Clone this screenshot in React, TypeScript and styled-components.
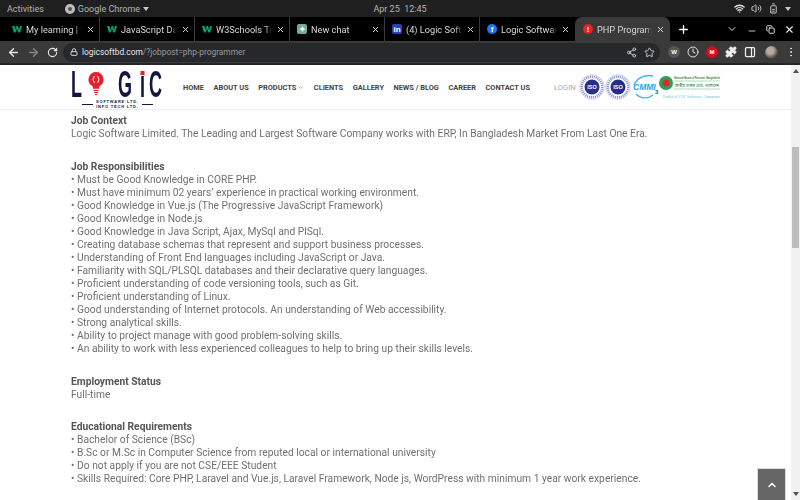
import React from 'react';
import styled, { createGlobalStyle } from 'styled-components';
import {
  ArrowLeft, ArrowRight, RotateCw, Lock, Share2, Star, Puzzle, X, Plus, ChevronDown,
  ChevronUp, Minus, Copy, Wifi, Volume2, BatteryMedium, Clock, PanelRight, MoreVertical,
} from 'lucide-react';

const GlobalStyle = createGlobalStyle`
  html, body { margin: 0; padding: 0; overflow: hidden; }
  body { font-family: "Roboto", "Liberation Sans", sans-serif; background: #fff; }
`;

const Screen = styled.div`
  position: relative;
  width: 800px;
  height: 500px;
  display: flex;
  flex-direction: column;
  overflow: hidden;
`;

/* ---- ubuntu top bar ---- */
const TopBar = styled.div`
  height: 17px;
  background: #1f1f1f;
  color: #b4b4b4;
  font: 9px "Roboto", sans-serif;
  display: grid;
  grid-template-columns: 1fr auto 1fr;
  align-items: center;
  padding: 0 7px;
`;

const TopLeft = styled.div`
  display: flex;
  align-items: center;
`;

const AppName = styled.div`
  display: flex;
  align-items: center;
  gap: 3px;
  margin-left: 21px;
`;

const Caret = styled.span`
  width: 0;
  height: 0;
  border-left: 3px solid transparent;
  border-right: 3px solid transparent;
  border-top: 4px solid #c8c8c8;
`;

const TopRight = styled.div`
  display: flex;
  align-items: center;
  justify-content: flex-end;
  gap: 6px;
  padding-right: 2px;
`;

/* ---- tab strip ---- */
const TabStrip = styled.div`
  height: 24px;
  background: #000;
  display: flex;
  align-items: stretch;
  padding-left: 5px;
  color: #d8d8d8;
`;

const Tab = styled.div<{ $active?: boolean; $divider?: boolean }>`
  width: 95px;
  box-sizing: border-box;
  display: flex;
  align-items: center;
  gap: 4px;
  padding: 0 4px 0 ${(p) => (p.$active ? 8 : 7)}px;
  font: 9.200px "Roboto", sans-serif;
  background: ${(p) => (p.$active ? '#3a3a3a' : 'transparent')};
  border-right: 1px solid ${(p) => (p.$divider ? '#3c3c3c' : 'transparent')};
  border-radius: ${(p) => (p.$active ? '7px 7px 0 0' : '0')};
`;

const TabTitle = styled.span`
  flex: 1;
  min-width: 0;
  white-space: nowrap;
  overflow: hidden;
  -webkit-mask-image: linear-gradient(90deg, #000 88%, transparent);
  mask-image: linear-gradient(90deg, #000 88%, transparent);
`;

const TabIcon = styled.span<{ $bg?: string; $color?: string; $round?: boolean }>`
  flex: none;
  width: 10px;
  height: 10px;
  display: flex;
  align-items: center;
  justify-content: center;
  font: bold 8px "Liberation Sans", sans-serif;
  background: ${(p) => p.$bg || 'transparent'};
  color: ${(p) => p.$color || '#fff'};
  border-radius: ${(p) => (p.$round ? '50%' : '2px')};
`;

const WindowControls = styled.div`
  margin-left: auto;
  display: flex;
  align-items: center;
  gap: 9px;
  padding-right: 5px;
`;

const NewTab = styled.div`
  display: flex;
  align-items: center;
  margin-left: 7px;
`;

/* ---- chrome toolbar ---- */
const Toolbar = styled.div`
  height: 22px;
  background: #3a3a3a;
  display: flex;
  align-items: center;
  padding-left: 7px;
  color: #e0e0e0;
  border-bottom: 2px solid #252525;
`;

const NavButtons = styled.div`
  display: flex;
  align-items: center;
  gap: 7px;
  width: 56px;
`;

const UrlBar = styled.div`
  width: 597px;
  height: 19px;
  border-radius: 10px;
  background: #27282b;
  display: flex;
  align-items: center;
  gap: 4px;
  padding: 0 3px 0 7px;
  box-sizing: border-box;
  font: 8.400px "Roboto", sans-serif;
  color: #e6e6e6;
`;

const UrlPath = styled.span`
  color: #9a9a9a;
`;

const UrlActions = styled.div`
  margin-left: auto;
  display: flex;
  gap: 7px;
  padding-right: 2px;
`;

const Extensions = styled.div`
  display: flex;
  align-items: center;
  gap: 7px;
  margin-left: 8px;
`;

const ExtBadge = styled.span<{ $bg: string }>`
  width: 12px;
  height: 12px;
  border-radius: 50%;
  background: ${(p) => p.$bg};
  color: #fff;
  font: bold 6px "Liberation Sans", sans-serif;
  display: flex;
  align-items: center;
  justify-content: center;
`;

const Avatar = styled.span`
  width: 13px;
  height: 13px;
  border-radius: 50%;
  margin-left: 2px;
  background: radial-gradient(circle at 40% 35%, #b9a9a0 0 30%, #4b4038 70%);
`;

/* ---- page ---- */
const Page = styled.div`
  flex: 1;
  display: flex;
  min-height: 0;
`;

const Main = styled.div`
  flex: 1;
  min-width: 0;
`;

const Header = styled.header`
  height: 45px;
  box-sizing: border-box;
  border-bottom: 1px solid #eeeeee;
  display: flex;
  align-items: center;
  padding-left: 71px;
`;

const Logo = styled.div`
  width: 92px;
  flex: none;
  align-self: flex-end;
  display: flex;
  flex-direction: column;
`;

const LogoMark = styled.div`
  display: flex;
  align-items: flex-start;
  height: 27px;
  color: #14163c;
`;

const LogoLetter = styled.span<{ $gap: number; $w: number }>`
  position: relative;
  display: inline-block;
  flex: none;
  width: ${(p) => p.$w}px;
  margin-left: ${(p) => p.$gap}px;
  font: bold 36px/27px "Liberation Sans", sans-serif;
  transform: scaleX(0.5);
  transform-origin: left center;
`;

const LogoDot = styled.span`
  position: absolute;
  left: 1px;
  top: 0;
  width: 8px;
  height: 4px;
  background: #e8202a;
  border-bottom: 1px solid #fff;
`;

const LogoFoot = styled.div`
  display: flex;
  align-items: center;
  gap: 3px;
  margin-top: 1px;
  padding-left: 11px;
`;

const LogoRule = styled.span`
  width: 11px;
  height: 1px;
  background: #14163c;
`;

const LogoSub = styled.div`
  font: bold 4px/5px "Liberation Sans", sans-serif;
  letter-spacing: 0.8px;
  color: #14163c;
  text-align: center;
  white-space: nowrap;
`;

const Nav = styled.nav`
  display: flex;
  align-items: center;
  gap: 9.500px;
  margin-left: 20px;
  font: bold 7.400px "Roboto", sans-serif;
  color: #444;
  white-space: nowrap;
`;

const NavItem = styled.span`
  display: flex;
  align-items: center;
  gap: 1px;
`;

const Login = styled.span`
  margin-left: 24px;
  font: 7.600px "Roboto", sans-serif;
  color: #aaa;
`;

const Badges = styled.div`
  display: flex;
  align-items: center;
  margin-left: 3px;
`;

const Content = styled.main`
  margin: 0 0 0 71px;
  padding-top: 4px;
  font: 11.600px/13px "Roboto", sans-serif;
  color: #707070;
  /* the site's narrow webfont isn't available, so squeeze Roboto to its width */
  transform: scaleX(0.885);
  transform-origin: 0 0;
`;

const Section = styled.section<{ $gap: number }>`
  margin-bottom: ${(p) => p.$gap}px;
`;

const SectionTitle = styled.div`
  font-weight: 700;
  color: #555;
`;

const Line = styled.div`
  white-space: nowrap;
`;

const Scrollbar = styled.div`
  width: 9px;
  flex: none;
  background: #f1f1f1;
  display: flex;
  flex-direction: column;
  align-items: center;
  position: relative;
`;

const ScrollThumb = styled.div`
  width: 7px;
  height: 101px;
  margin-top: 82px;
  background: #bcbcbc;
`;

const ScrollArrow = styled.span<{ $down?: boolean }>`
  position: absolute;
  ${(p) => (p.$down ? 'bottom: 4px' : 'top: 4px')};
  width: 0;
  height: 0;
  border-left: 3px solid transparent;
  border-right: 3px solid transparent;
  ${(p) => (p.$down ? 'border-top' : 'border-bottom')}: 4px solid #505050;
`;

const BackToTop = styled.div`
  position: absolute;
  right: 14px;
  bottom: 0;
  width: 29px;
  height: 32px;
  background: #666;
  border: 1px solid #ddd;
  border-bottom: 0;
  box-sizing: border-box;
  display: flex;
  align-items: center;
  justify-content: center;
  color: #fff;
`;

const tabs = [
  { title: 'My learning | W3Schools', icon: 'w' },
  { title: 'JavaScript Data Types', icon: 'w' },
  { title: 'W3Schools Tryit Editor', icon: 'w' },
  { title: 'New chat', icon: 'gpt' },
  { title: '(4) Logic Software', icon: 'in' },
  { title: 'Logic Software Limited', icon: 'fb' },
];

const navItems = ['HOME', 'ABOUT US', 'PRODUCTS', 'CLIENTS', 'GALLERY', 'NEWS / BLOG', 'CAREER', 'CONTACT US'];

const sections = [
  {
    title: 'Job Context',
    gap: 20,
    lines: ['Logic Software Limited. The Leading and Largest Software Company works with ERP, In Bangladesh Market From Last One Era.'],
  },
  {
    title: 'Job Responsibilities',
    gap: 20,
    lines: [
      '• Must be Good Knowledge in CORE PHP.',
      '• Must have minimum 02 years’ experience in practical working environment.',
      '• Good Knowledge in Vue.js (The Progressive JavaScript Framework)',
      '• Good Knowledge in Node.js',
      '• Good Knowledge in Java Script, Ajax, MySql and PlSql.',
      '• Creating database schemas that represent and support business processes.',
      '• Understanding of Front End languages including JavaScript or Java.',
      '• Familiarity with SQL/PLSQL databases and their declarative query languages.',
      '• Proficient understanding of code versioning tools, such as Git.',
      '• Proficient understanding of Linux.',
      '• Good understanding of Internet protocols. An understanding of Web accessibility.',
      '• Strong analytical skills.',
      '• Ability to project manage with good problem-solving skills.',
      '• An ability to work with less experienced colleagues to help to bring up their skills levels.',
    ],
  },
  { title: 'Employment Status', gap: 19, lines: ['Full-time'] },
  {
    title: 'Educational Requirements',
    gap: 0,
    lines: [
      '• Bachelor of Science (BSc)',
      '• B.Sc or M.Sc in Computer Science from reputed local or international university',
      '• Do not apply if you are not CSE/EEE Student',
      '• Skills Required: Core PHP, Laravel and Vue.js, Laravel Framework, Node js, WordPress with minimum 1 year work experience.',
    ],
  },
];

const W3Glyph = () => (
  <svg width="10" height="10" viewBox="0 0 10 10" style={{ flex: 'none' }}>
    <path d="M0 2h2.500l1 4 1-4h1.500l1 4 1-4H10L8 8.500H6.500l-1.500-4-1.500 4H2z" fill="#04aa6d" />
  </svg>
);

const Favicon = ({ kind }: { kind: string }) => {
  if (kind === 'w') return <W3Glyph />;
  if (kind === 'gpt') return <TabIcon $bg="#74aa9c">✦</TabIcon>;
  if (kind === 'in') return <TabIcon $bg="#2d3fbd">in</TabIcon>;
  return <TabIcon $bg="#1877f2" $round>f</TabIcon>;
};

const Bulb = () => (
  <svg width="16" height="25" viewBox="0 0 16 25" style={{ marginLeft: 6, flex: 'none' }}>
    <path d="M8 1a7.500 7.500 0 0 0-4 13.800c.8.7 1 1.700 1 3h6c0-1.300.2-2.300 1-3A7.500 7.500 0 0 0 8 1z" fill="#e8202a" />
    <path d="M6.500 5 5 8.500 6.500 12M9.500 5 11 8.500 9.500 12" stroke="#fff" strokeWidth="1" fill="none" />
    <path d="M5.500 19.500h5M6 21.500h4M7 23.500h2" stroke="#e8202a" strokeWidth="1.200" />
  </svg>
);

const IsoBadge = () => (
  <svg width="26" height="26" viewBox="0 0 26 26">
    <circle cx="13" cy="13" r="12.300" fill="#fff" stroke="#c4c7e6" strokeWidth="0.800" />
    <circle cx="13" cy="13" r="10.300" fill="none" stroke="#8f95cf" strokeWidth="2.400" strokeDasharray="1.200 0.800" />
    <circle cx="13" cy="13" r="7.500" fill="#242e8f" />
    <text x="13" y="15" textAnchor="middle" fontSize="5.500" fontWeight="700" fill="#fff" fontFamily="Liberation Sans">ISO</text>
  </svg>
);

const CmmiBadge = () => (
  <svg width="28" height="28" viewBox="0 0 28 28">
    <path d="M3 12C6 5 14 1 22 3" stroke="#35b6ee" strokeWidth="1.500" fill="none" />
    <path d="M5 21c5 5 12 5 17 1" stroke="#35b6ee" strokeWidth="1.200" fill="none" />
    <text x="2" y="17" fontSize="8.500" fontWeight="700" fontStyle="italic" fill="#1fa5e6" fontFamily="Liberation Sans">CMMI</text>
    <text x="24" y="21" fontSize="6" fontWeight="700" fill="#235a8a" fontFamily="Liberation Sans">3</text>
  </svg>
);

const VatBadge = () => (
  <svg width="62" height="28" viewBox="0 0 62 28">
    <circle cx="7" cy="10" r="7" fill="#2f9e58" />
    <circle cx="7" cy="10" r="3.500" fill="#d32f2f" />
    <text x="15" y="6" fontSize="2.600" fontWeight="700" fill="#3a7a45" fontFamily="Liberation Sans" textLength={46} lengthAdjust="spacingAndGlyphs">National Board of Revenue, Bangladesh</text>
    <path d="M15 8h46M15 16h46" stroke="#5cb876" strokeWidth="0.500" />
    <text x="16" y="14" fontSize="5" fill="#2c6a3c" fontFamily="Noto Sans Bengali, Noto Sans, sans-serif" textLength={44} lengthAdjust="spacingAndGlyphs">জাতীয় রাজস্ব বোর্ড, বাংলাদেশ</text>
    <text x="4" y="25" fontSize="4.800" fontWeight="700" fill="#9bd3ea" fontFamily="Liberation Serif" textLength={57} lengthAdjust="spacingAndGlyphs">Enlisted VAT Software Company</text>
  </svg>
);

const ChromeGlyph = () => (
  <svg width="10" height="10" viewBox="0 0 10 10">
    <circle cx="5" cy="5" r="5" fill="#bdbdbd" />
    <circle cx="5" cy="5" r="2" fill="#555" />
  </svg>
);

export default function App() {
  return (
    <Screen>
      <GlobalStyle />
      <TopBar>
        <TopLeft>
          Activities
          <AppName>
            <ChromeGlyph />
            Google Chrome
            <Caret />
          </AppName>
        </TopLeft>
        <div>Apr 25&nbsp;&nbsp;12:45</div>
        <TopRight>
          <Wifi size={11} color="#e0e0e0" strokeWidth={3} />
          <Volume2 size={11} color="#d0d0d0" />
          <BatteryMedium size={11} color="#d0d0d0" style={{ transform: 'rotate(-90deg)' }} />
          <Caret />
        </TopRight>
      </TopBar>

      <TabStrip>
        {tabs.map((tab, i) => (
          <Tab key={tab.title} $divider={i < 5}>
            <Favicon kind={tab.icon} />
            <TabTitle>{tab.title}</TabTitle>
            <X size={9} color="#e0e0e0" strokeWidth={2.500} />
          </Tab>
        ))}
        <Tab $active>
          <TabIcon $bg="#e8202a" $round>!</TabIcon>
          <TabTitle>PHP Programmer</TabTitle>
          <X size={9} color="#e0e0e0" strokeWidth={2.500} />
        </Tab>
        <NewTab>
          <Plus size={13} color="#fff" strokeWidth={2.500} />
        </NewTab>
        <WindowControls>
          <ChevronDown size={12} color="#d8d8d8" />
          <Minus size={10} color="#e8e8e8" style={{ marginTop: 4 }} />
          <Copy size={9} color="#e8e8e8" strokeWidth={2.500} />
          <X size={11} color="#e8e8e8" strokeWidth={2.500} />
        </WindowControls>
      </TabStrip>

      <Toolbar>
        <NavButtons>
          <ArrowLeft size={13} color="#e8e8e8" strokeWidth={2.500} />
          <ArrowRight size={13} color="#858585" strokeWidth={2.500} />
          <RotateCw size={11} color="#e8e8e8" strokeWidth={2.500} />
        </NavButtons>
        <UrlBar>
          <Lock size={8} color="#d0d0d0" strokeWidth={3} />
          <span>
            logicsoftbd.com<UrlPath>/?jobpost=php-programmer</UrlPath>
          </span>
          <UrlActions>
            <Share2 size={11} color="#d0d0d0" />
            <Star size={11} color="#d0d0d0" />
          </UrlActions>
        </UrlBar>
        <Extensions>
          <ExtBadge $bg="#555">W</ExtBadge>
          <Clock size={12} color="#e0e0e0" />
          <ExtBadge $bg="#d50c1f">M</ExtBadge>
          <Puzzle size={12} color="#f0f0f0" fill="#f0f0f0" />
          <PanelRight size={12} color="#f0f0f0" strokeWidth={2.500} />
          <Avatar />
          <MoreVertical size={12} color="#e0e0e0" />
        </Extensions>
      </Toolbar>

      <Page>
        <Main>
          <Header>
            <Logo>
              <LogoMark>
                <LogoLetter $gap={0} $w={11}>L</LogoLetter>
                <Bulb />
                <LogoLetter $gap={14} $w={14}>G</LogoLetter>
                <LogoLetter $gap={8} $w={9}>
                  I
                  <LogoDot />
                </LogoLetter>
                <LogoLetter $gap={0} $w={14}>C</LogoLetter>
              </LogoMark>
              <LogoFoot>
                <LogoRule />
                <div>
                  <LogoSub>SOFTWARE LTD.</LogoSub>
                  <LogoSub>INFO TECH LTD.</LogoSub>
                </div>
                <LogoRule />
              </LogoFoot>
            </Logo>
            <Nav>
              {navItems.map((item) => (
                <NavItem key={item}>
                  {item}
                  {item === 'PRODUCTS' && <ChevronDown size={7} color="#777" />}
                </NavItem>
              ))}
            </Nav>
            <Login>LOGIN</Login>
            <Badges>
              <IsoBadge />
              <IsoBadge />
              <CmmiBadge />
              <VatBadge />
            </Badges>
          </Header>
          <Content>
            {sections.map((section) => (
              <Section key={section.title} $gap={section.gap}>
                <SectionTitle>{section.title}</SectionTitle>
                {section.lines.map((line) => (
                  <Line key={line}>{line}</Line>
                ))}
              </Section>
            ))}
          </Content>
        </Main>
        <Scrollbar>
          <ScrollArrow />
          <ScrollThumb />
          <ScrollArrow $down />
        </Scrollbar>
      </Page>

      <BackToTop>
        <ChevronUp size={12} strokeWidth={3} />
      </BackToTop>
    </Screen>
  );
}
